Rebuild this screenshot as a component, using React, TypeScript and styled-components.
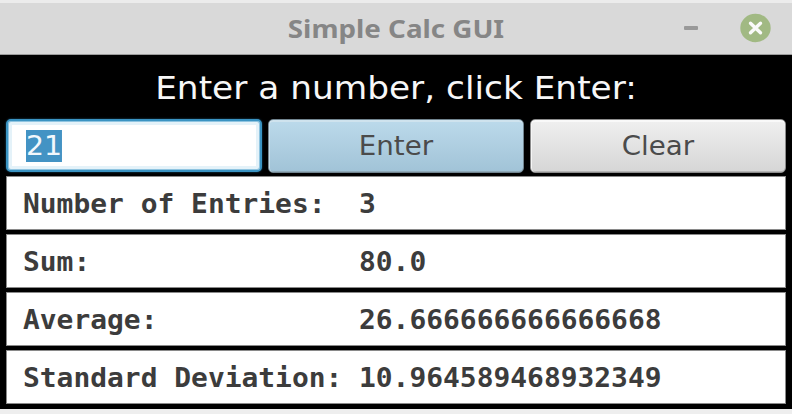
import React from 'react';
import styled, { createGlobalStyle } from 'styled-components';

const GlobalStyle = createGlobalStyle`
  * { box-sizing: border-box; }
  body { margin: 0; background: #eee; overflow: hidden; }
`;

const Window = styled.div`
  width: 792px;
  height: 414px;
  display: flex;
  flex-direction: column;
  font-family: "DejaVu Sans", sans-serif;
`;

const TitleBar = styled.header`
  height: 55px;
  flex: none;
  display: grid;
  grid-template-columns: 120px 1fr 120px;
  align-items: center;
  background: #d9d9d9;
  border-top: 3px solid #ececec;
  border-bottom: 1px solid #9c9c9c;
`;

const Title = styled.h1`
  grid-column: 2;
  margin: 0;
  padding-bottom: 1px;
  text-align: center;
  font: 700 25px/50px "Noto Sans", sans-serif;
  transform: scaleX(1.11);
  color: #868686;
  white-space: nowrap;
`;

const WindowControls = styled.div`
  display: flex;
  justify-content: flex-end;
  align-items: center;
  gap: 41px;
  height: 48px;
  padding: 0 21px 2px 0;
`;

const Content = styled.main`
  height: 354px;
  flex: none;
  background: #000;
  padding: 0 6px;
  display: flex;
  flex-direction: column;
`;

const Prompt = styled.div`
  height: 64px;
  text-align: center;
  font-size: 32px;
  line-height: 66px;
  transform: scaleX(1.073);
  color: #f7f7f7;
  white-space: nowrap;
`;

const Controls = styled.div`
  display: grid;
  grid-template-columns: 256px 256px 256px;
  gap: 6px;
  height: 54px;
`;

const Field = styled.div`
  height: 53px;
  border: 2px solid #3a93c2;
  border-radius: 5px;
  background: #fff;
  box-shadow: inset 0 0 0 1px #8fc4e0, inset 0 0 0 4px #e4f2f9, 0 0 2px #1d5f83;
  padding-left: 18px;
  display: flex;
  align-items: center;
`;

const Selection = styled.span`
  background: #4393c4;
  color: #f2f8fc;
  font-size: 26px;
  line-height: 32px;
  transform: scaleX(1.09);
  transform-origin: 0 50%;
`;

const Button = styled.button<{ $active?: boolean }>`
  border: 1px solid ${p => (p.$active ? '#71848f' : '#8c8c8c')};
  border-radius: 5px;
  background: ${p => (p.$active ? 'linear-gradient(#bcdaeb, #a1c3d7)' : 'linear-gradient(#f0f0f0, #d6d6d6)')};
  box-shadow: inset 0 2px 0 ${p => (p.$active ? '#cfe3ee' : '#f9f9f9')},
    inset 1px 0 0 ${p => (p.$active ? '#c8dfeb' : '#f6f6f6')},
    inset 0 -1px 0 ${p => (p.$active ? '#8fa9b7' : '#b4b4b4')};
  font: 26px "DejaVu Sans", sans-serif;
  color: #4b4b4b;
  padding: 0;
`;

const ButtonLabel = styled.span`
  display: inline-block;
  transform: scaleX(1.065);
`;

const Results = styled.section`
  margin-top: 3px;
  display: grid;
  gap: 4px;
`;

const Row = styled.div`
  height: 54px;
  background: #fff;
  border: 1px solid #8a8a8a;
  padding: 1px 0 0 16px;
  display: grid;
  grid-template-columns: 336px 1fr;
  align-items: center;
  font: 700 27px "DejaVu Sans Mono", monospace;
  color: #3c3c3c;
`;

const Cell = styled.span`
  white-space: nowrap;
  transform: scaleX(1.034);
  transform-origin: 0 50%;
`;

const rows = [
  ['Number of Entries:', '3'],
  ['Sum:', '80.0'],
  ['Average:', '26.666666666666668'],
  ['Standard Deviation:', '10.964589468932349'],
];

export default function App() {
  return (
    <Window>
      <GlobalStyle />
      <TitleBar>
        <Title>Simple Calc GUI</Title>
        <WindowControls>
          <svg width="14" height="30"><rect y="13" width="14" height="4" rx="1" fill="#999" /></svg>
          <svg width="32" height="30" viewBox="0 0 32 30">
            <ellipse cx="16.5" cy="15" rx="15.2" ry="14.2" fill="#a1b983" />
            <path d="M11.5 10.2l10 9.6M21.5 10.2l-10 9.6" stroke="#fafafa" strokeWidth="3.4" strokeLinecap="round" />
          </svg>
        </WindowControls>
      </TitleBar>
      <Content>
        <Prompt>Enter a number, click Enter:</Prompt>
        <Controls>
          <Field><Selection>21</Selection></Field>
          <Button $active><ButtonLabel>Enter</ButtonLabel></Button>
          <Button><ButtonLabel>Clear</ButtonLabel></Button>
        </Controls>
        <Results>
          {rows.map(([label, value]) => (
            <Row key={label}><Cell>{label}</Cell><Cell>{value}</Cell></Row>
          ))}
        </Results>
      </Content>
    </Window>
  );
}
